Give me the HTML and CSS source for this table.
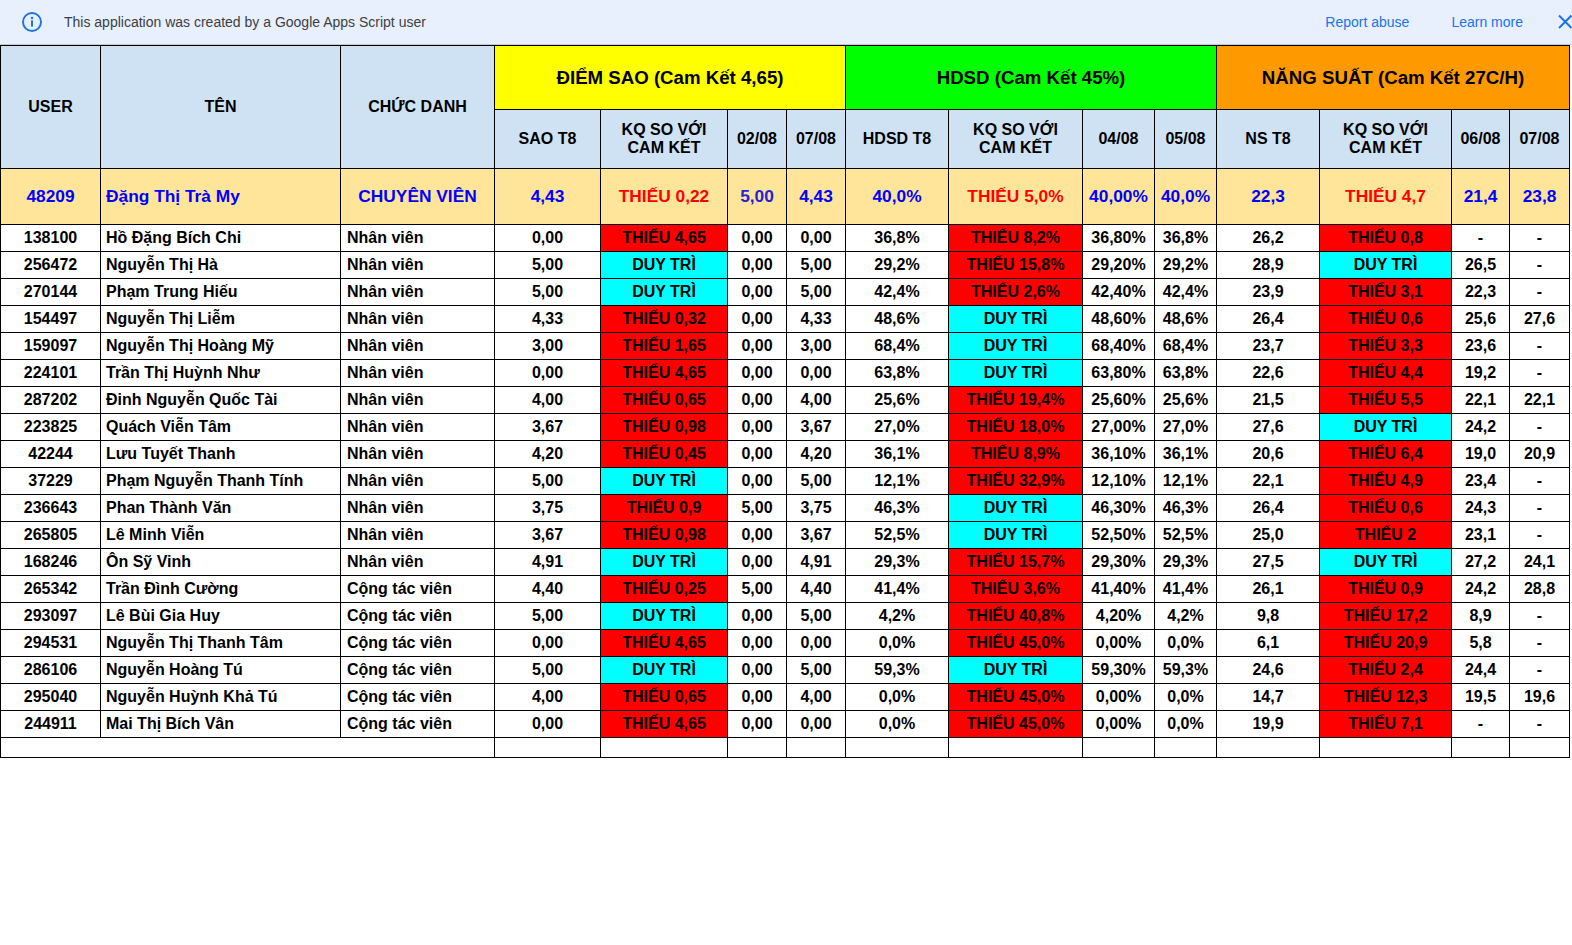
FILE: index.html
```html
<!DOCTYPE html>
<html lang="vi">
<head>
<meta charset="utf-8">
<title>Bảng theo dõi</title>
<link rel="stylesheet" href="styles.css">
</head>
<body>
<div class="banner">
  <svg class="info" width="22" height="22" viewBox="0 0 22 22"><circle cx="11" cy="11" r="9" fill="none" stroke="#1a73e8" stroke-width="1.9"/><circle cx="11" cy="7" r="1.25" fill="#1a73e8"/><rect x="10" y="9.4" width="2" height="6.2" fill="#1a73e8"/></svg>
  <span class="msg">This application was created by a Google Apps Script user</span>
  <span class="links">
    <a class="lnk">Report abuse</a>
    <a class="lnk lnk2">Learn more</a>
    <svg class="close" width="16" height="16" viewBox="0 0 16 16"><path d="M2 1.5 L14.5 14 M14.5 1.5 L2 14" stroke="#1a73e8" stroke-width="2" fill="none"/></svg>
  </span>
</div>

<div class="sheet">
  <div class="cell hd tall">USER</div>
  <div class="cell hd tall">TÊN</div>
  <div class="cell hd tall">CHỨC DANH</div>
  <div class="cell grp g-yellow span4">ĐIỂM SAO (Cam Kết 4,65)</div>
  <div class="cell grp g-green span4">HDSD (Cam Kết 45%)</div>
  <div class="cell grp g-orange span4">NĂNG SUẤT (Cam Kết 27C/H)</div>

  <div class="cell hd">SAO T8</div>
  <div class="cell hd two">KQ SO VỚI<br>CAM KẾT</div>
  <div class="cell hd">02/08</div>
  <div class="cell hd">07/08</div>
  <div class="cell hd">HDSD T8</div>
  <div class="cell hd two">KQ SO VỚI<br>CAM KẾT</div>
  <div class="cell hd">04/08</div>
  <div class="cell hd">05/08</div>
  <div class="cell hd">NS T8</div>
  <div class="cell hd two">KQ SO VỚI<br>CAM KẾT</div>
  <div class="cell hd">06/08</div>
  <div class="cell hd">07/08</div>

  <div class="cell hl">48209</div>
  <div class="cell hl lft">Đặng Thị Trà My</div>
  <div class="cell hl">CHUYÊN VIÊN</div>
  <div class="cell hl">4,43</div>
  <div class="cell hl miss">THIẾU 0,22</div>
  <div class="cell hl dk">5,00</div>
  <div class="cell hl">4,43</div>
  <div class="cell hl">40,0%</div>
  <div class="cell hl miss">THIẾU 5,0%</div>
  <div class="cell hl">40,00%</div>
  <div class="cell hl">40,0%</div>
  <div class="cell hl">22,3</div>
  <div class="cell hl miss">THIẾU 4,7</div>
  <div class="cell hl">21,4</div>
  <div class="cell hl">23,8</div>

  <div class="cell">138100</div><div class="cell lft">Hồ Đặng Bích Chi</div><div class="cell lft role">Nhân viên</div><div class="cell">0,00</div><div class="cell bad">THIẾU 4,65</div><div class="cell">0,00</div><div class="cell">0,00</div><div class="cell">36,8%</div><div class="cell bad">THIẾU 8,2%</div><div class="cell">36,80%</div><div class="cell">36,8%</div><div class="cell">26,2</div><div class="cell bad">THIẾU 0,8</div><div class="cell">-</div><div class="cell">-</div>

  <div class="cell">256472</div><div class="cell lft">Nguyễn Thị Hà</div><div class="cell lft role">Nhân viên</div><div class="cell">5,00</div><div class="cell ok">DUY TRÌ</div><div class="cell">0,00</div><div class="cell">5,00</div><div class="cell">29,2%</div><div class="cell bad">THIẾU 15,8%</div><div class="cell">29,20%</div><div class="cell">29,2%</div><div class="cell">28,9</div><div class="cell ok">DUY TRÌ</div><div class="cell">26,5</div><div class="cell">-</div>

  <div class="cell">270144</div><div class="cell lft">Phạm Trung Hiếu</div><div class="cell lft role">Nhân viên</div><div class="cell">5,00</div><div class="cell ok">DUY TRÌ</div><div class="cell">0,00</div><div class="cell">5,00</div><div class="cell">42,4%</div><div class="cell bad">THIẾU 2,6%</div><div class="cell">42,40%</div><div class="cell">42,4%</div><div class="cell">23,9</div><div class="cell bad">THIẾU 3,1</div><div class="cell">22,3</div><div class="cell">-</div>

  <div class="cell">154497</div><div class="cell lft">Nguyễn Thị Liễm</div><div class="cell lft role">Nhân viên</div><div class="cell">4,33</div><div class="cell bad">THIẾU 0,32</div><div class="cell">0,00</div><div class="cell">4,33</div><div class="cell">48,6%</div><div class="cell ok">DUY TRÌ</div><div class="cell">48,60%</div><div class="cell">48,6%</div><div class="cell">26,4</div><div class="cell bad">THIẾU 0,6</div><div class="cell">25,6</div><div class="cell">27,6</div>

  <div class="cell">159097</div><div class="cell lft">Nguyễn Thị Hoàng Mỹ</div><div class="cell lft role">Nhân viên</div><div class="cell">3,00</div><div class="cell bad">THIẾU 1,65</div><div class="cell">0,00</div><div class="cell">3,00</div><div class="cell">68,4%</div><div class="cell ok">DUY TRÌ</div><div class="cell">68,40%</div><div class="cell">68,4%</div><div class="cell">23,7</div><div class="cell bad">THIẾU 3,3</div><div class="cell">23,6</div><div class="cell">-</div>

  <div class="cell">224101</div><div class="cell lft">Trần Thị Huỳnh Như</div><div class="cell lft role">Nhân viên</div><div class="cell">0,00</div><div class="cell bad">THIẾU 4,65</div><div class="cell">0,00</div><div class="cell">0,00</div><div class="cell">63,8%</div><div class="cell ok">DUY TRÌ</div><div class="cell">63,80%</div><div class="cell">63,8%</div><div class="cell">22,6</div><div class="cell bad">THIẾU 4,4</div><div class="cell">19,2</div><div class="cell">-</div>

  <div class="cell">287202</div><div class="cell lft">Đinh Nguyễn Quốc Tài</div><div class="cell lft role">Nhân viên</div><div class="cell">4,00</div><div class="cell bad">THIẾU 0,65</div><div class="cell">0,00</div><div class="cell">4,00</div><div class="cell">25,6%</div><div class="cell bad">THIẾU 19,4%</div><div class="cell">25,60%</div><div class="cell">25,6%</div><div class="cell">21,5</div><div class="cell bad">THIẾU 5,5</div><div class="cell">22,1</div><div class="cell">22,1</div>

  <div class="cell">223825</div><div class="cell lft">Quách Viễn Tâm</div><div class="cell lft role">Nhân viên</div><div class="cell">3,67</div><div class="cell bad">THIẾU 0,98</div><div class="cell">0,00</div><div class="cell">3,67</div><div class="cell">27,0%</div><div class="cell bad">THIẾU 18,0%</div><div class="cell">27,00%</div><div class="cell">27,0%</div><div class="cell">27,6</div><div class="cell ok">DUY TRÌ</div><div class="cell">24,2</div><div class="cell">-</div>

  <div class="cell">42244</div><div class="cell lft">Lưu Tuyết Thanh</div><div class="cell lft role">Nhân viên</div><div class="cell">4,20</div><div class="cell bad">THIẾU 0,45</div><div class="cell">0,00</div><div class="cell">4,20</div><div class="cell">36,1%</div><div class="cell bad">THIẾU 8,9%</div><div class="cell">36,10%</div><div class="cell">36,1%</div><div class="cell">20,6</div><div class="cell bad">THIẾU 6,4</div><div class="cell">19,0</div><div class="cell">20,9</div>

  <div class="cell">37229</div><div class="cell lft">Phạm Nguyễn Thanh Tính</div><div class="cell lft role">Nhân viên</div><div class="cell">5,00</div><div class="cell ok">DUY TRÌ</div><div class="cell">0,00</div><div class="cell">5,00</div><div class="cell">12,1%</div><div class="cell bad">THIẾU 32,9%</div><div class="cell">12,10%</div><div class="cell">12,1%</div><div class="cell">22,1</div><div class="cell bad">THIẾU 4,9</div><div class="cell">23,4</div><div class="cell">-</div>

  <div class="cell">236643</div><div class="cell lft">Phan Thành Văn</div><div class="cell lft role">Nhân viên</div><div class="cell">3,75</div><div class="cell bad">THIẾU 0,9</div><div class="cell">5,00</div><div class="cell">3,75</div><div class="cell">46,3%</div><div class="cell ok">DUY TRÌ</div><div class="cell">46,30%</div><div class="cell">46,3%</div><div class="cell">26,4</div><div class="cell bad">THIẾU 0,6</div><div class="cell">24,3</div><div class="cell">-</div>

  <div class="cell">265805</div><div class="cell lft">Lê Minh Viễn</div><div class="cell lft role">Nhân viên</div><div class="cell">3,67</div><div class="cell bad">THIẾU 0,98</div><div class="cell">0,00</div><div class="cell">3,67</div><div class="cell">52,5%</div><div class="cell ok">DUY TRÌ</div><div class="cell">52,50%</div><div class="cell">52,5%</div><div class="cell">25,0</div><div class="cell bad">THIẾU 2</div><div class="cell">23,1</div><div class="cell">-</div>

  <div class="cell">168246</div><div class="cell lft">Ôn Sỹ Vinh</div><div class="cell lft role">Nhân viên</div><div class="cell">4,91</div><div class="cell ok">DUY TRÌ</div><div class="cell">0,00</div><div class="cell">4,91</div><div class="cell">29,3%</div><div class="cell bad">THIẾU 15,7%</div><div class="cell">29,30%</div><div class="cell">29,3%</div><div class="cell">27,5</div><div class="cell ok">DUY TRÌ</div><div class="cell">27,2</div><div class="cell">24,1</div>

  <div class="cell">265342</div><div class="cell lft">Trần Đình Cường</div><div class="cell lft role">Cộng tác viên</div><div class="cell">4,40</div><div class="cell bad">THIẾU 0,25</div><div class="cell">5,00</div><div class="cell">4,40</div><div class="cell">41,4%</div><div class="cell bad">THIẾU 3,6%</div><div class="cell">41,40%</div><div class="cell">41,4%</div><div class="cell">26,1</div><div class="cell bad">THIẾU 0,9</div><div class="cell">24,2</div><div class="cell">28,8</div>

  <div class="cell">293097</div><div class="cell lft">Lê Bùi Gia Huy</div><div class="cell lft role">Cộng tác viên</div><div class="cell">5,00</div><div class="cell ok">DUY TRÌ</div><div class="cell">0,00</div><div class="cell">5,00</div><div class="cell">4,2%</div><div class="cell bad">THIẾU 40,8%</div><div class="cell">4,20%</div><div class="cell">4,2%</div><div class="cell">9,8</div><div class="cell bad">THIẾU 17,2</div><div class="cell">8,9</div><div class="cell">-</div>

  <div class="cell">294531</div><div class="cell lft">Nguyễn Thị Thanh Tâm</div><div class="cell lft role">Cộng tác viên</div><div class="cell">0,00</div><div class="cell bad">THIẾU 4,65</div><div class="cell">0,00</div><div class="cell">0,00</div><div class="cell">0,0%</div><div class="cell bad">THIẾU 45,0%</div><div class="cell">0,00%</div><div class="cell">0,0%</div><div class="cell">6,1</div><div class="cell bad">THIẾU 20,9</div><div class="cell">5,8</div><div class="cell">-</div>

  <div class="cell">286106</div><div class="cell lft">Nguyễn Hoàng Tú</div><div class="cell lft role">Cộng tác viên</div><div class="cell">5,00</div><div class="cell ok">DUY TRÌ</div><div class="cell">0,00</div><div class="cell">5,00</div><div class="cell">59,3%</div><div class="cell ok">DUY TRÌ</div><div class="cell">59,30%</div><div class="cell">59,3%</div><div class="cell">24,6</div><div class="cell bad">THIẾU 2,4</div><div class="cell">24,4</div><div class="cell">-</div>

  <div class="cell">295040</div><div class="cell lft">Nguyễn Huỳnh Khả Tú</div><div class="cell lft role">Cộng tác viên</div><div class="cell">4,00</div><div class="cell bad">THIẾU 0,65</div><div class="cell">0,00</div><div class="cell">4,00</div><div class="cell">0,0%</div><div class="cell bad">THIẾU 45,0%</div><div class="cell">0,00%</div><div class="cell">0,0%</div><div class="cell">14,7</div><div class="cell bad">THIẾU 12,3</div><div class="cell">19,5</div><div class="cell">19,6</div>

  <div class="cell">244911</div><div class="cell lft">Mai Thị Bích Vân</div><div class="cell lft role">Cộng tác viên</div><div class="cell">0,00</div><div class="cell bad">THIẾU 4,65</div><div class="cell">0,00</div><div class="cell">0,00</div><div class="cell">0,0%</div><div class="cell bad">THIẾU 45,0%</div><div class="cell">0,00%</div><div class="cell">0,0%</div><div class="cell">19,9</div><div class="cell bad">THIẾU 7,1</div><div class="cell">-</div><div class="cell">-</div>

  <div class="cell span3"></div><div class="cell"></div><div class="cell"></div><div class="cell"></div><div class="cell"></div><div class="cell"></div><div class="cell"></div><div class="cell"></div><div class="cell"></div><div class="cell"></div><div class="cell"></div><div class="cell"></div><div class="cell"></div>
</div>
</body>
</html>
```

FILE: styles.css
```css
html, body {
  margin: 0;
  padding: 0;
  background: #ffffff;
  overflow: hidden;
}

.banner {
  box-sizing: border-box;
  height: 45px;
  background: #e8f0fe;
  border-bottom: 1px solid #c6c9cc;
  display: flex;
  align-items: center;
  font-family: "Liberation Sans", Arial, sans-serif;
  font-size: 14px;
  color: #3c4043;
}

.info {
  margin-left: 21px;
  flex: none;
}

.msg {
  margin-left: 21px;
}

.links {
  margin-left: auto;
  display: flex;
  align-items: center;
}

.lnk {
  color: #1a73e8;
  text-decoration: none;
}

.lnk2 {
  margin-left: 42px;
}

.close {
  margin-left: 34px;
  margin-right: -1px;
  flex: none;
}

.sheet {
  display: grid;
  grid-template-columns: 100px 240px 154px 106px 127px 59px 59px 103px 134px 72px 62px 103px 132px 58px 60px;
  grid-template-rows: 64px 59px 56px repeat(19, 27px) 20px;
  width: max-content;
  border-top: 1px solid #000;
  border-left: 1px solid #000;
  font-family: "Liberation Sans", Arial, sans-serif;
  font-weight: bold;
  font-size: 16px;
  color: #000;
}

.cell {
  box-sizing: border-box;
  border-right: 1px solid #000;
  border-bottom: 1px solid #000;
  display: flex;
  align-items: center;
  justify-content: center;
  text-align: center;
  white-space: nowrap;
  overflow: hidden;
  background: #ffffff;
}

.lft {
  justify-content: flex-start;
  padding-left: 5px;
}

.role {
  padding-left: 6px;
}

.hd {
  background: #cfe2f3;
}

.two {
  line-height: 18px;
}

.tall {
  grid-row: span 2;
}

.span4 {
  grid-column: span 4;
}

.span3 {
  grid-column: span 3;
}

.grp {
  font-size: 18.67px;
}

.g-yellow {
  background: #ffff00;
}

.g-green {
  background: #00ff00;
}

.g-orange {
  background: #ff9900;
}

.hl {
  background: #ffe599;
  color: #0000ff;
  font-size: 17.33px;
}

.hl.miss {
  color: #ff0000;
}

.hl.dk {
  color: #2323d8;
}

.bad {
  background: #ff0000;
}

.ok {
  background: #00ffff;
}
```
